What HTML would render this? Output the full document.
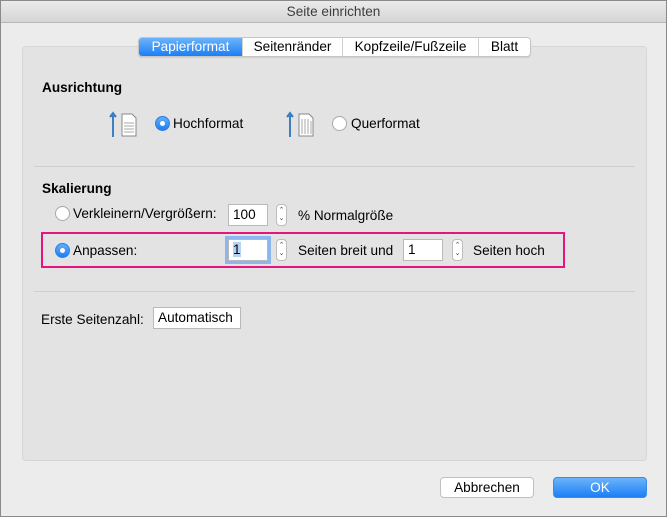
<!DOCTYPE html><html><head><style>
*{margin:0;padding:0;box-sizing:border-box}
body{width:667px;height:517px;background:#ececec;font-family:"Liberation Sans",sans-serif;font-size:13.6px;color:#000;position:relative;overflow:hidden;border:1px solid #8a8a8a}
.a{position:absolute}
.title{left:0;top:0;width:665px;height:22px;background:linear-gradient(#ebebeb,#d6d6d6);border-bottom:1px solid #b8b8b8;text-align:center;line-height:22px;color:#3d3d3d;font-size:13.6px}
.panel{left:21px;top:45px;width:625px;height:415px;background:#e3e3e3;border:1px solid #d6d6d6;border-radius:4px}
.tabs{left:137px;top:36px;height:20px;display:flex;background:#fff;border:1px solid #c5c5c5;border-radius:4px;overflow:hidden;box-shadow:0 1px 1px rgba(0,0,0,.1)}
.tabs div{padding:0;line-height:18px;text-align:center;border-right:1px solid #d0d0d0}
.tabs .on{background:linear-gradient(#6cb3fa,#1b7ff5);color:#fff}
.b{font-weight:bold}
.sep{left:33px;width:601px;height:1px;background:#cfcfcf}
.rad{width:15px;height:15px;border-radius:50%;background:#fff;border:1px solid #a8a8a8}
.rad.on{background:linear-gradient(#64aefa,#1d7ff3);border-color:#2a7de0}
.rad.on::after{content:"";position:absolute;left:4px;top:4px;width:5px;height:5px;border-radius:50%;background:#fff}
.inp{background:#fff;border:1px solid #b9b9b9;height:22px;line-height:20px;padding-left:4px}
.step{width:11px;height:22px;background:#fff;border:1px solid #bdbdbd;border-radius:4px;font-size:7px;line-height:8px;text-align:center;color:#444;padding-top:2px}
.btn{height:21px;border-radius:4px;text-align:center;line-height:19px}
</style></head><body>
<div class="a title">Seite einrichten</div>
<div class="a panel"></div>
<div class="a tabs"><div class="on" style="width:104px">Papierformat</div><div style="width:100px">Seitenränder</div><div style="width:136px">Kopfzeile/Fußzeile</div><div style="width:51px;border:none">Blatt</div></div>
<div class="a b" style="left:41px;top:79px">Ausrichtung</div>
<svg class="a" style="left:108px;top:110px" width="34" height="26"><path d="M4 26V3M1 6l3-4 3 4" stroke="#3f7ec4" stroke-width="2" fill="#3f7ec4"/><path d="M13 3h10l4 4v18H13z" fill="#fff" stroke="#888"/><path d="M15 12h10M15 15h10M15 18h10M15 21h10" stroke="#aaa"/></svg>
<div class="a rad on" style="left:154px;top:115px"></div><div class="a" style="left:172px;top:115px">Hochformat</div>
<svg class="a" style="left:285px;top:110px" width="34" height="26"><path d="M4 26V3M1 6l3-4 3 4" stroke="#3f7ec4" stroke-width="2" fill="#3f7ec4"/><path d="M13 3h10l4 4v18H13z" fill="#fff" stroke="#888"/><path d="M16 8v15M19 8v15M22 8v15M25 10v13" stroke="#aaa"/></svg>
<div class="a rad" style="left:331px;top:115px"></div><div class="a" style="left:350px;top:115px">Querformat</div>
<div class="a sep" style="top:165px"></div>
<div class="a b" style="left:41px;top:180px">Skalierung</div>
<div class="a rad" style="left:54px;top:205px"></div><div class="a" style="left:72px;top:205px">Verkleinern/Vergrößern:</div>
<div class="a inp" style="left:227px;top:203px;width:40px">100</div>
<div class="a step" style="left:275px;top:203px">⌃<br>⌄</div>
<div class="a" style="left:297px;top:207px">% Normalgröße</div>
<div class="a" style="left:40px;top:231px;width:524px;height:36px;border:2px solid #e4157f"></div>
<div class="a rad on" style="left:54px;top:242px"></div><div class="a" style="left:72px;top:242px">Anpassen:</div>
<div class="a inp" style="left:227px;top:238px;width:40px;box-shadow:0 0 0 3px #8cb7ec"><span style="background:#b3d3f7">1</span></div>
<div class="a step" style="left:275px;top:238px">⌃<br>⌄</div>
<div class="a" style="left:297px;top:242px">Seiten breit und</div>
<div class="a inp" style="left:402px;top:238px;width:40px">1</div>
<div class="a step" style="left:451px;top:238px">⌃<br>⌄</div>
<div class="a" style="left:472px;top:242px">Seiten hoch</div>
<div class="a sep" style="top:290px"></div>
<div class="a" style="left:40px;top:311px">Erste Seitenzahl:</div>
<div class="a inp" style="left:152px;top:306px;width:88px">Automatisch</div>
<div class="a btn" style="left:439px;top:476px;width:94px;background:#fff;border:1px solid #c0c0c0">Abbrechen</div>
<div class="a btn" style="left:552px;top:476px;width:94px;background:linear-gradient(#6cb3fa,#1b7ff5);color:#fff;border:1px solid #3b8ae8">OK</div>
</body></html>
